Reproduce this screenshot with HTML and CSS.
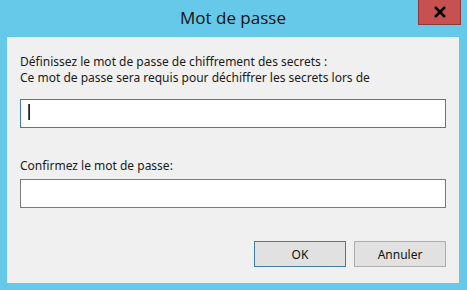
FILE: index.html
```html
<!DOCTYPE html>
<html lang="fr">
<head>
<meta charset="utf-8">
<title>Mot de passe</title>
<link rel="stylesheet" href="styles.css">
</head>
<body>
<div class="window">
  <div class="titlebar">
    <div class="title">Mot de passe</div>
    <div class="close" aria-label="Fermer">
      <svg width="14" height="12" viewBox="0 0 14 12"><path d="M2 1 L12 11 M12 1 L2 11" stroke="#000" stroke-width="2.6" fill="none"/></svg>
    </div>
  </div>
  <div class="client">
    <div class="label first">
      <div>Définissez le mot de passe de chiffrement des secrets :</div>
      <div>Ce mot de passe sera requis pour déchiffrer les secrets lors de</div>
    </div>
    <div class="input focused"><span class="caret"></span></div>
    <div class="label second">Confirmez le mot de passe:</div>
    <div class="input"></div>
    <div class="buttons">
      <div class="btn default">OK</div>
      <div class="btn">Annuler</div>
    </div>
  </div>
</div>
</body>
</html>
```
FILE: styles.css
```css
html, body {
  margin: 0;
  padding: 0;
}
body {
  width: 467px;
  height: 290px;
  background: #67c9ea;
  font-family: "Open Sans", "Noto Sans", sans-serif;
  overflow: hidden;
}
.window {
  display: flex;
  flex-direction: column;
  height: 290px;
  padding: 0 8px 7px 7px;
  box-sizing: border-box;
}
.titlebar {
  height: 37px;
  display: flex;
  justify-content: center;
  position: relative;
}
.title {
  font-size: 17px;
  color: #111;
  line-height: 19px;
  padding-top: 8px;
}
.close {
  position: absolute;
  right: -2px;
  top: 0;
  width: 41px;
  height: 24px;
  background: #c75050;
  border: 1px solid #8e3a3a;
  border-top: none;
  display: flex;
  align-items: center;
  justify-content: center;
}
.client {
  flex: 1;
  background: #f0f0f0;
  padding: 0 13px;
  display: flex;
  flex-direction: column;
  font-family: "Noto Sans", sans-serif;
  font-size: 12px;
  color: #1a1a1a;
}
.label {
  line-height: 16px;
}
.label.first {
  margin-top: 17px;
}
.label.second {
  margin-top: 30px;
}
.input {
  height: 29px;
  box-sizing: border-box;
  background: #fff;
  border: 1px solid #7a7a7a;
  margin-top: 5px;
  position: relative;
}
.input.focused {
  margin-top: 13px;
  border-color: #3c7fb1;
}
.caret {
  position: absolute;
  left: 7px;
  top: 4px;
  width: 1px;
  height: 16px;
  background: #222;
  border-left: 1px solid #555;
}
.buttons {
  display: flex;
  justify-content: flex-end;
  gap: 8px;
  margin-top: 33px;
}
.btn {
  width: 92px;
  height: 26px;
  box-sizing: border-box;
  background: #e1e1e1;
  border: 1px solid #adadad;
  display: flex;
  align-items: center;
  justify-content: center;
  font-size: 12px;
  color: #111;
}
.btn.default {
  border-color: #3c7fb1;
}
```
